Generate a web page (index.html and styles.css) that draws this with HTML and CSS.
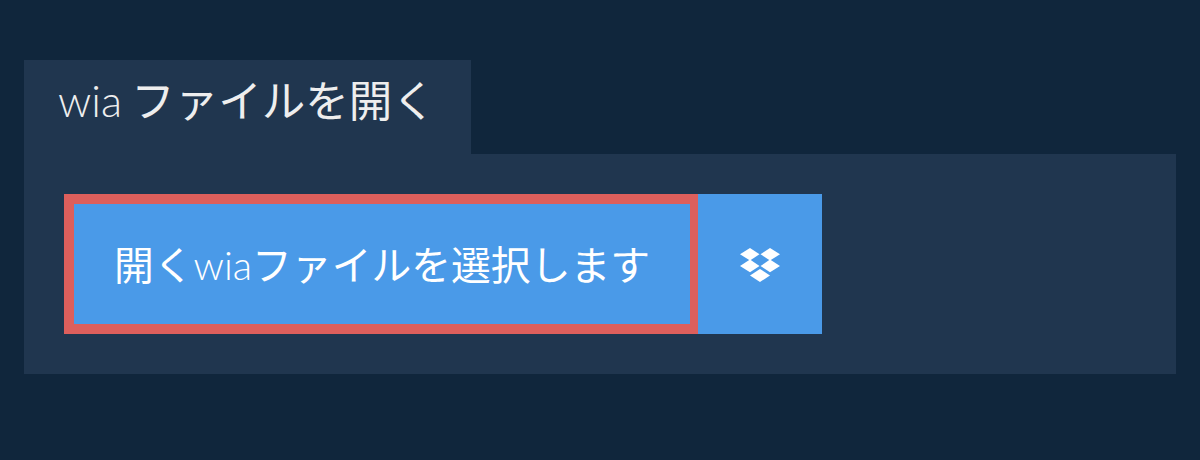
FILE: index.html
```html
<!DOCTYPE html>
<html lang="ja">
 <head>
  <meta charset="utf-8">
  <title>wia ファイルを開く</title>
  <link rel="stylesheet" href="styles.css">
 </head>
 <body>
  <div class="tab"><span class="latin">wia</span> ファイルを開く</div>
  <div class="panel">
   <div class="btn-group">
    <button class="btn-select"><span>開く<span class="latin">wia</span>ファイルを選択します</span></button>
    <button class="btn-dropbox" aria-label="Dropbox">
     <svg width="40" height="34" viewBox="0 0 40 34">
      <polygon points="0,6.2 10,0 19.5,6.2 10,12.4"/>
      <polygon points="20.5,6.2 30,0 40,6.2 30,12.4"/>
      <polygon points="0,18 10,11.6 19.5,18 10,24.2"/>
      <polygon points="20.5,18 30,11.6 40,18 30,24.2"/>
      <polygon points="10,27.4 20,21 30,27.4 20,34"/>
     </svg>
    </button>
   </div>
  </div>
 </body>
</html>
```

FILE: styles.css
```css
body{
  margin: 0;
  padding: 60px 24px 0;
  background-color: #10263c;
  font-family: "Lato", "Noto Sans CJK JP", sans-serif;
}
.latin{
  font-weight: 300;
}
.tab{
  display: inline-block;
  vertical-align: top;
  width: 447px;
  height: 94px;
  box-sizing: border-box;
  line-height: 80px;
  padding-left: 34px;
  background-color: #20364f;
  color: #eeeeee;
  font-size: 43.5px;
  word-spacing: -2px;
}
.panel{
  display: flex;
  height: 140px;
  padding: 40px;
  background-color: #20364f;
}
.btn-group{
  display: flex;
}
button{
  height: 140px;
  margin: 0;
  padding: 0;
  color: #fff;
  background-color: #4a9ae8;
  font-family: inherit;
}
.btn-select{
  width: 634px;
  padding-bottom: 4px;
  border: 10px solid #dd5f5c;
  border-right-width: 8px;
  font-size: 39.8px;
}
.btn-dropbox{
  display: flex;
  align-items: center;
  justify-content: center;
  width: 124px;
  padding-top: 2px;
  border: none;
}
.btn-dropbox svg{
  fill: #fff;
}
```
